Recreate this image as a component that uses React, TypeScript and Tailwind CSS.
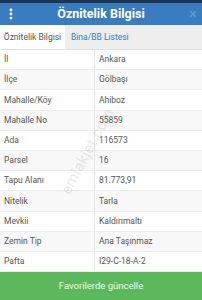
import { EllipsisVertical, X } from "lucide-react";

const rows: [string, string][] = [
  ["İl", "Ankara"],
  ["İlçe", "Gölbaşı"],
  ["Mahalle/Köy", "Ahiboz"],
  ["Mahalle No", "55859"],
  ["Ada", "116573"],
  ["Parsel", "16"],
  ["Tapu Alanı", "81.773,91"],
  ["Nitelik", "Tarla"],
  ["Mevkii", "Kaldırımaltı"],
  ["Zemin Tip", "Ana Taşınmaz"],
  ["Pafta", "I29-C-18-A-2"],
];

export default function App() {
  return (
    <div className="relative w-[202px] h-[300px] overflow-hidden bg-white flex flex-col font-['Roboto',sans-serif]">
      <div className="h-[3px] bg-[#1c3552]" />
      <div className="h-[22px] bg-[#3a7cc0] flex items-center px-[4px]">
        <EllipsisVertical className="w-[14px] h-[14px] text-white" strokeWidth={3} />
        <div className="flex-1 text-center text-white font-bold text-[12.5px] leading-none pr-[4px]">
          Öznitelik Bilgisi
        </div>
        <X className="w-[10px] h-[10px] text-[#6b97c6]" strokeWidth={3} />
      </div>
      <div className="h-[25px] bg-[#eeeeee] flex items-stretch border-b border-[#e0e0e0]">
        <div className="bg-white w-[65px] flex items-center justify-center text-[8.5px] text-[#555]">
          Öznitelik Bilgisi
        </div>
        <div className="flex items-center pl-[6px] text-[8.5px] text-[#3a7cc0]">Bina/BB Listesi</div>
      </div>
      <div className="flex flex-col">
        {rows.map(([k, v], i) => (
          <div
            key={k}
            className={
              "h-[20.2px] flex border-b border-[#ececec] text-[8.5px] text-[#555] " +
              (i % 2 === 1 ? "bg-[#f8f8f8]" : "bg-white")
            }
          >
            <div className="w-[95px] border-r border-[#e6e6e6] flex items-center pl-[4px]">{k}</div>
            <div className="flex-1 flex items-center pl-[4px]">{v}</div>
          </div>
        ))}
      </div>
      <div className="flex-1 bg-[#5cb85c] flex items-center justify-center text-white/90 text-[9.5px]">
        Favorilerde güncelle
      </div>
      <div className="pointer-events-none absolute left-[40px] top-[140px] -rotate-[62deg] text-[15px] text-[#999] opacity-20 tracking-wide">
        emlakjet.com
      </div>
    </div>
  );
}
